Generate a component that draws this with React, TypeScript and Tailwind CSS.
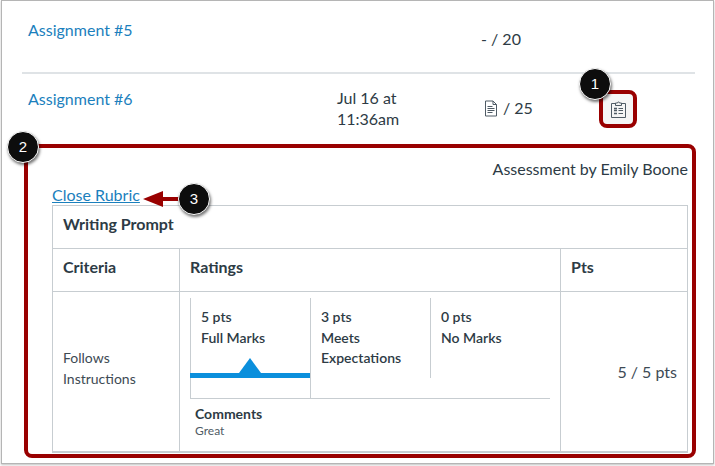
function Marker({ n, className }: { n: number; className: string }) {
  return (
    <div
      className={`absolute flex h-[32px] w-[32px] items-center justify-center rounded-full border border-white bg-[#0d0d0d] font-['Liberation_Sans',sans-serif] text-[15px] text-white shadow-[1px_2px_3px_rgba(0,0,0,0.55)] ${className}`}
    >
      {n}
    </div>
  );
}

function DocIcon() {
  return (
    <svg width="14" height="17" viewBox="0 0 14 17" fill="none" stroke="#4f5b65" strokeWidth="1">
      <path d="M1.500 1h7.500l3.500 3.500v11.500h-11z" />
      <path d="M9 1v3.500h3.500" />
      <path d="M3.500 6.500h5M3.500 8.500h7M3.500 10.500h7M3.500 12.500h5" />
    </svg>
  );
}

function RubricIcon() {
  return (
    <svg width="15" height="17" viewBox="0 0 15 17" fill="none" stroke="#4f5b65" strokeWidth="1">
      <path d="M4.500 2.500h-4v14h14v-14h-4" />
      <path d="M4.500 4.500v-2.500h2a1 1 0 0 1 2 0h2v2.500z" />
      <path d="M3 7.500h3M3 9.500h3M3 12.500h3" strokeWidth="1.500" />
      <path d="M7.500 7.500h4.500M7.500 9.500h4.500M7.500 12.500h4.500" />
    </svg>
  );
}

function Rating({ pts, label, selected, rule }: { pts: string; label: string; selected?: boolean; rule?: string }) {
  return (
    <div className="relative h-full w-[120px]">
      <div className={`absolute left-0 top-0 w-px bg-[#c7cdd1] ${rule ?? "h-full"}`} />
      <div className="px-[11px] pt-[9px] text-[14px] font-semibold leading-[20.500px] text-[#2d3b45]">
        <p>{pts}</p>
        <p className="whitespace-pre-line">{label}</p>
      </div>
      {selected && (
        <div className="absolute bottom-[20px] left-0 right-0">
          <div className="mx-auto h-0 w-0 border-x-[11px] border-b-[15px] border-x-transparent border-b-[#0b8fdc]" />
          <div className="h-[5px] bg-[#0b8fdc]" />
        </div>
      )}
    </div>
  );
}

export default function App() {
  return (
    <div className="relative h-[466px] w-[715px] overflow-hidden bg-white font-['Lato',sans-serif] text-[#2d3b45]">
      <div className="mx-px h-[464px] border border-[#b5b5b5] bg-white pl-[20px] pr-[18px] shadow-[0_1px_2px_rgba(0,0,0,0.25)]">
        <div className="flex h-[73px] border-b-2 border-[#dfe3e6]">
          <a className="ml-[6px] mt-[19px] w-[300px] text-[16px] leading-[20px] text-[#1b80bd]">Assignment #5</a>
          <div className="ml-[153px] mt-[28px] text-[16px] leading-[20px]">- / 20</div>
        </div>
        <div className="flex h-[69px]">
          <a className="ml-[6px] mt-[15px] w-[309px] text-[16px] leading-[20px] text-[#1b80bd]">Assignment #6</a>
          <div className="mt-[13px] w-[147px] text-[16px] leading-[21px]">
            Jul 16 at
            <br />
            11:36am
          </div>
          <div className="mt-[24px] flex h-[20px] items-center gap-[5px] text-[16px]">
            <DocIcon />/ 25
          </div>
        </div>
        <div className="ml-[30px] w-[636px]">
          <div className="h-[62px] pt-[16px] text-right text-[16px] leading-[20px]">Assessment by Emily Boone</div>
          <div className="border border-[#c7cdd1]">
            <div className="flex h-[43px] items-center border-b border-[#c7cdd1] pb-[7px] pl-[10px] text-[16px] font-bold">Writing Prompt</div>
            <div className="flex h-[43px] items-center border-b border-[#c7cdd1] text-[16px] font-bold">
              <div className="flex h-full w-[127px] items-center border-r border-[#c7cdd1] pb-[6px] pl-[10px]">Criteria</div>
              <div className="flex h-full w-[381px] items-center border-r border-[#c7cdd1] pb-[6px] pl-[10px]">Ratings</div>
              <div className="pb-[6px] pl-[10px]">Pts</div>
            </div>
            <div className="flex h-[160px] border-b border-[#c7cdd1]">
              <div className="flex h-full w-[127px] items-center border-r border-[#c7cdd1] pl-[10px] text-[14px] leading-[21px] text-[#3d4a54]">
                <p className="-mt-[7px]">
                  Follows
                  <br />
                  Instructions
                </p>
              </div>
              <div className="h-full w-[381px] border-r border-[#c7cdd1] px-[10px] pt-[6px]">
                <div className="flex h-[101px] w-[360px] border-b border-[#c7cdd1]">
                  <Rating pts="5 pts" label="Full Marks" selected />
                  <Rating pts="3 pts" label={"Meets\nExpectations"} />
                  <Rating pts="0 pts" label="No Marks" rule="h-[80px]" />
                </div>
                <div className="pl-[5px] pt-[6px]">
                  <p className="text-[14px] font-bold leading-[18px]">Comments</p>
                  <p className="text-[12px] leading-[15px] text-[#4f5b65]">Great</p>
                </div>
              </div>
              <div className="flex flex-1 items-center justify-end pr-[10px] text-[16px] text-[#3d4a54]">5 / 5 pts</div>
            </div>
          </div>
        </div>
      </div>

      <div className="absolute left-[599px] top-[90px] flex h-[38px] w-[38px] items-center justify-center rounded-[8px] border-[4px] border-[#990000] bg-[#f5f5f5]">
        <RubricIcon />
      </div>
      <div className="absolute left-[24px] top-[144px] h-[314px] w-[672px] rounded-[8px] border-[4px] border-[#990000]" />
      <a className="absolute left-[52px] top-[185px] text-[16px] leading-[20px] text-[#1b80bd] underline">Close Rubric</a>

      <svg className="absolute left-[143px] top-[191px]" width="36" height="16" viewBox="0 0 36 16">
        <path d="M0 8l20-8v6h16v4h-16v6z" fill="#990000" />
      </svg>

      <Marker n={1} className="left-[579px] top-[68px]" />
      <Marker n={2} className="left-[7px] top-[131px]" />
      <Marker n={3} className="left-[178px] top-[183px]" />
    </div>
  );
}
